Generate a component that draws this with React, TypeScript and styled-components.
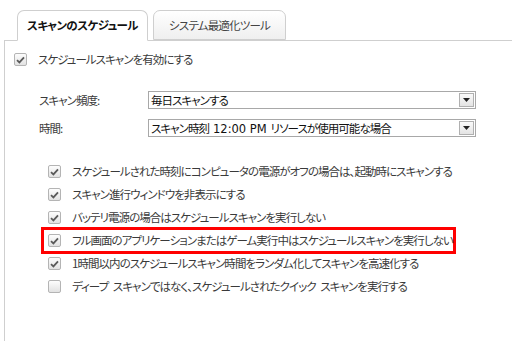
import styled, { createGlobalStyle } from 'styled-components'

const GlobalStyle = createGlobalStyle`
  html, body {
    margin: 0;
    padding: 0;
    background: #ffffff;
  }
  body {
    font-family: 'Noto Sans CJK JP', 'Noto Sans', sans-serif;
    font-size: 11.5px;
    letter-spacing: -0.95px;
    word-spacing: 3px;
    color: #333333;
    font-feature-settings: 'palt';
  }
`

const Page = styled.div`
  width: 512px;
  height: 341px;
  overflow: hidden;
  padding: 10px 0 0 4px;
  box-sizing: border-box;
  display: flex;
  flex-direction: column;
`

const TabBar = styled.div`
  display: flex;
  align-items: flex-end;
  gap: 5px;
  padding-left: 13px;
  height: 30px;
  position: relative;
  z-index: 1;
`

const Tab = styled.div<{ $active?: boolean; $width: number }>`
  width: ${(p) => p.$width}px;
  height: ${(p) => (p.$active ? 31 : 30)}px;
  box-sizing: border-box;
  border: 1px solid #cfcfcf;
  border-bottom: ${(p) => (p.$active ? '1px solid #ffffff' : '1px solid #cfcfcf')};
  border-radius: 7px 7px 0 0;
  background: ${(p) => (p.$active ? '#ffffff' : 'linear-gradient(#ffffff, #efefef)')};
  display: flex;
  align-items: center;
  justify-content: center;
  padding-bottom: ${(p) => (p.$active ? 1 : 0)}px;
  font-weight: ${(p) => (p.$active ? 700 : 400)};
  color: ${(p) => (p.$active ? '#111111' : '#444444')};
  font-size: 11.5px;
  letter-spacing: ${(p) => (p.$active ? -0.6 : -0.8)}px;
  margin-bottom: ${(p) => (p.$active ? -1 : 0)}px;
`

const Panel = styled.div`
  flex: 1;
  border-top: 1px solid #cfcfcf;
  border-left: 1px solid #cfcfcf;
  padding: 7px 0 0 9px;
  display: flex;
  flex-direction: column;
`

const CheckRow = styled.div<{ $indent?: number }>`
  display: flex;
  align-items: center;
  height: 23px;
  gap: 11px;
  padding-left: ${(p) => p.$indent ?? 0}px;
  white-space: nowrap;
`

const Highlight = styled.div`
  width: 415px;
  height: 27px;
  box-sizing: border-box;
  margin: -2px 0 -2px 27px;
  border: 3px solid #ff0000;
  padding-left: 4px;
  display: flex;
  align-items: center;
  gap: 11px;
  white-space: nowrap;
`

const Box = styled.span`
  width: 13px;
  height: 13px;
  box-sizing: border-box;
  border: 1px solid #b4b4b4;
  border-radius: 2px;
  background: linear-gradient(#fdfdfd, #e2e2e2);
  display: inline-flex;
  align-items: center;
  justify-content: center;
  flex: none;
`

const Label = styled.span`
  color: #3a3a3a;
  line-height: 1;
`

const FormArea = styled.div`
  display: flex;
  flex-direction: column;
  gap: 11px;
  padding: 20px 0 21px 25px;
`

const FormRow = styled.div`
  display: flex;
  align-items: center;
  height: 17px;
`

const FieldLabel = styled.span`
  width: 109px;
  color: #3a3a3a;
`

const Select = styled.div`
  width: 328px;
  height: 18px;
  box-sizing: border-box;
  border: 1px solid #a8a8a8;
  display: flex;
  align-items: center;
  background: #ffffff;
`

const SelectText = styled.span`
  flex: 1;
  padding-left: 2px;
  color: #111111;
  white-space: nowrap;
  overflow: hidden;
`

const Latin = styled.span`
  font-family: 'DejaVu Sans', 'Liberation Sans', sans-serif;
  font-size: 11.5px;
  letter-spacing: 0;
  word-spacing: 0;
  padding: 0 4px;
`

const DropButton = styled.span`
  width: 15px;
  height: 14px;
  margin-right: 1px;
  box-sizing: border-box;
  border: 1px solid #b0b0b0;
  background: linear-gradient(#fafafa, #e4e4e4);
  display: flex;
  align-items: center;
  justify-content: center;
`

const OptionList = styled.div`
  display: flex;
  flex-direction: column;
  padding-top: 3px;
`

const Check = () => (
  <svg width="9" height="8" viewBox="0 0 9 8">
    <path d="M1 4.2 L3.4 6.4 L8 1.4" fill="none" stroke="#5a5a5a" strokeWidth="1.8" />
  </svg>
)

const CheckBox = ({ checked }: { checked: boolean }) => <Box>{checked && <Check />}</Box>

const Arrow = () => (
  <svg width="7" height="4" viewBox="0 0 7 4">
    <path d="M0 0 H7 L3.5 4 Z" fill="#222222" />
  </svg>
)

const options = [
  { text: 'スケジュールされた時刻にコンピュータの電源がオフの場合は、起動時にスキャンする', checked: true },
  { text: 'スキャン進行ウィンドウを非表示にする', checked: true },
  { text: 'バッテリ電源の場合はスケジュールスキャンを実行しない', checked: true },
  { text: 'フル画面のアプリケーションまたはゲーム実行中はスケジュールスキャンを実行しない', checked: true, highlight: true },
  { text: '1時間以内のスケジュールスキャン時間をランダム化してスキャンを高速化する', checked: true },
  { text: 'ディープ スキャンではなく、スケジュールされたクイック スキャンを実行する', checked: false },
]

export default function App() {
  return (
    <>
      <GlobalStyle />
      <Page>
        <TabBar>
          <Tab $active $width={131}>スキャンのスケジュール</Tab>
          <Tab $width={133}>システム最適化ツール</Tab>
        </TabBar>
        <Panel>
          <CheckRow>
            <CheckBox checked />
            <Label>スケジュールスキャンを有効にする</Label>
          </CheckRow>
          <FormArea>
            <FormRow>
              <FieldLabel>スキャン頻度:</FieldLabel>
              <Select>
                <SelectText>毎日スキャンする</SelectText>
                <DropButton><Arrow /></DropButton>
              </Select>
            </FormRow>
            <FormRow>
              <FieldLabel>時間:</FieldLabel>
              <Select>
                <SelectText>
                  スキャン時刻<Latin>12:00 PM</Latin>リソースが使用可能な場合
                </SelectText>
                <DropButton><Arrow /></DropButton>
              </Select>
            </FormRow>
          </FormArea>
          <OptionList>
            {options.map((o) =>
              o.highlight ? (
                <Highlight key={o.text}>
                  <CheckBox checked={o.checked} />
                  <Label>{o.text}</Label>
                </Highlight>
              ) : (
                <CheckRow key={o.text} $indent={34}>
                  <CheckBox checked={o.checked} />
                  <Label>{o.text}</Label>
                </CheckRow>
              )
            )}
          </OptionList>
        </Panel>
      </Page>
    </>
  )
}
